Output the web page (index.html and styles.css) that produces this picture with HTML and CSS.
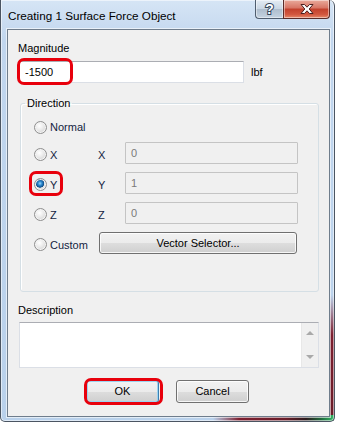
FILE: index.html
```html
<!DOCTYPE html>
<html lang="en">
<head>
  <meta charset="UTF-8">
  <meta name="viewport" content="width=device-width, initial-scale=1.0">
  <title>Creating 1 Surface Force Object</title>
  <link rel="stylesheet" href="styles.css">
</head>
<body>
  <div class="window">
    <div class="titlebar">
      <span class="title">Creating 1 Surface Force Object</span>
      <div class="caption-btns">
        <span class="cap-btn help">?</span>
        <span class="cap-btn close">
          <svg width="16" height="12" viewBox="0 0 16 12">
            <path d="M2 1.5 H5.5 L8 4.2 L10.5 1.5 H14 L10.2 6 L14 10.5 H10.5 L8 7.8 L5.5 10.5 H2 L5.8 6 Z" fill="#fff" stroke="#4a1f1f" stroke-width="1" stroke-linejoin="round"/>
          </svg>
        </span>
      </div>
    </div>

    <div class="client">
      <div class="label">Magnitude</div>
      <div class="mag-row">
        <div class="mark-wrap">
          <div class="textbox mag">-1500</div>
          <span class="mark mark-mag"></span>
        </div>
        <span class="unit">lbf</span>
      </div>

      <fieldset class="group">
        <legend>Direction</legend>
        <div class="dir-grid">
          <div class="dir-row first">
            <span class="radio"></span><span class="radio-text">Normal</span>
          </div>
          <div class="dir-row">
            <div class="opt"><span class="radio"></span><span class="radio-text">X</span></div>
            <span class="axis">X</span>
            <div class="textbox disabled">0</div>
          </div>
          <div class="dir-row">
            <div class="opt">
              <span class="radio checked"></span><span class="radio-text">Y</span>
              <span class="mark mark-y"></span>
            </div>
            <span class="axis">Y</span>
            <div class="textbox disabled">1</div>
          </div>
          <div class="dir-row">
            <div class="opt"><span class="radio"></span><span class="radio-text">Z</span></div>
            <span class="axis">Z</span>
            <div class="textbox disabled">0</div>
          </div>
          <div class="dir-row">
            <div class="opt"><span class="radio"></span><span class="radio-text">Custom</span></div>
            <div class="btn vector">Vector Selector...</div>
          </div>
        </div>
      </fieldset>

      <div class="label desc-label">Description</div>
      <div class="memo">
        <div class="memo-scroll">
          <span class="arrow up"></span>
          <span class="arrow down"></span>
        </div>
      </div>

      <div class="actions">
        <div class="mark-wrap">
          <div class="btn default">OK</div>
          <span class="mark mark-ok"></span>
        </div>
        <div class="btn">Cancel</div>
      </div>
    </div>
  </div>
</body>
</html>
```

FILE: styles.css
```css
body {
  margin: 0;
  background: #ffffff;
  font-family: "Liberation Sans", Arial, sans-serif;
  font-size: 11px;
  color: #000;
}

.window {
  box-sizing: border-box;
  width: 335px;
  height: 422px;
  border: 1px solid #4b5562;
  border-top: none;
  border-radius: 0 6px 5px 5px;
  background:
    linear-gradient(to right, rgba(125, 31, 48, 0) 212px, #7d1f30 238px, #6a1c28 285px, #2b1a1c 305px, #1f6a3c 320px, #34b866) left bottom / 100% 6px no-repeat,
    linear-gradient(rgba(125, 31, 48, 0) 295px, #7d1f30 335px, #6a1c28) right top / 5px 100% no-repeat,
    linear-gradient(#d6e5f5, #c1d6ee 40px, #b9d1eb);
  box-shadow: inset 0 0 0 1px rgba(255, 255, 255, 0.55);
  padding: 0 4px 4px 6px;
  display: flex;
  flex-direction: column;
}

.titlebar {
  height: 29px;
  flex: none;
  display: flex;
  justify-content: space-between;
  align-items: flex-start;
}

.title {
  font-size: 11.7px;
  margin: 9px 0 0 1px;
}

.caption-btns {
  display: flex;
}

.cap-btn {
  box-sizing: border-box;
  height: 19px;
  border: 1px solid #4f5d6e;
  border-top: none;
  display: flex;
  align-items: center;
  justify-content: center;
  box-shadow: inset 0 0 0 1px rgba(255, 255, 255, 0.45);
}

.help {
  width: 28px;
  border-radius: 0 0 0 4px;
  border-right: none;
  background: linear-gradient(#e3ebf3, #c9d6e3 50%, #aebdcd 51%, #c5d3e1);
  color: #fff;
  font-weight: bold;
  font-size: 14px;
  -webkit-text-stroke: 2px #33475c;
  paint-order: stroke fill;
}

.close {
  width: 47px;
  border-color: #5a2c2a;
  border-radius: 0 0 4px 0;
  background: linear-gradient(#e9aa9c, #d77464 45%, #c2402c 50%, #d2573f 80%, #e6896a);
}

.client {
  flex: 1;
  background: #f0f0f0;
  border: 1px solid #6f7d8c;
  box-shadow: 0 0 0 1px rgba(255, 255, 255, 0.6);
  padding: 11px 10px 0 10px;
}

.label {
  height: 14px;
  line-height: 14px;
}

.mag-row {
  display: flex;
  align-items: center;
  margin-top: 6px;
}

.mark-wrap {
  position: relative;
}

.textbox {
  box-sizing: border-box;
  height: 22px;
  line-height: 20px;
  padding: 0 5px;
  background: #fff;
  border: 1px solid #dbdfe6;
  border-top-color: #abadb3;
  border-left-color: #e2e3ea;
}

.mag {
  width: 226px;
  padding-left: 6px;
}

.unit {
  margin-left: 7px;
}

.mark {
  position: absolute;
  border: 3px solid #e8000c;
  border-radius: 7px;
  box-sizing: border-box;
}

.mark-mag {
  left: -1px;
  top: -3px;
  width: 56px;
  height: 27px;
}

.group {
  margin: 13px 0 0 2px;
  padding: 0 0 37px 0;
  width: 297px;
  border: 1px solid #d5dfe5;
  border-radius: 3px;
  box-shadow: inset 1px 1px 0 #fff;
}

.group legend {
  padding: 0 2px;
  margin-left: 4px;
  line-height: 14px;
}

.dir-grid {
  display: flex;
  flex-direction: column;
  gap: 8px;
  padding: 6px 0 0 13px;
}

.dir-row {
  display: grid;
  grid-template-columns: 64px 27px 173px;
  align-items: center;
  height: 22px;
}

.dir-row.first {
  display: flex;
  align-items: center;
  height: 22px;
  margin-bottom: -4px;
}

.opt {
  position: relative;
  display: flex;
  align-items: center;
  margin-top: 3px;
}

.radio {
  width: 11px;
  height: 11px;
  border-radius: 50%;
  border: 1px solid #8f8f8f;
  background: radial-gradient(circle at 40% 35%, #ffffff 0, #eeeeee 35%, #c9c9c9 100%);
  box-shadow: inset 0 0 0 1px #f4f4f4;
  flex: none;
}

.radio.checked {
  background:
    radial-gradient(circle at 45% 40%, #9fd6f6 0, #2d8ad0 2px, #0f4d87 4px, transparent 4.5px),
    radial-gradient(circle at 40% 35%, #ffffff 0, #eeeeee 35%, #c9c9c9 100%);
}

.radio-text {
  margin-left: 3px;
  color: #13233f;
}

.axis {
  color: #13233f;
  margin-top: 3px;
}

.textbox.disabled {
  background: #f0f0f0;
  border: 1px solid #c4c4c4;
  color: #7a7a7a;
  border-radius: 1px;
}

.mark-y {
  left: -5px;
  top: -7px;
  width: 34px;
  height: 25px;
}

.btn {
  box-sizing: border-box;
  height: 23px;
  line-height: 21px;
  text-align: center;
  border: 1px solid #707070;
  border-radius: 3px;
  background: linear-gradient(#f2f2f2, #ebebeb 50%, #dddddd 51%, #cfcfcf);
  box-shadow: inset 0 0 0 1px rgba(255, 255, 255, 0.8);
}

.vector {
  grid-column: 2 / 4;
  width: 198px;
  margin-left: 1px;
  height: 22px;
  line-height: 20px;
}

.desc-label {
  margin-top: 11px;
}

.memo {
  position: relative;
  margin: 5px 0 0 1px;
  width: 300px;
  height: 46px;
  box-sizing: border-box;
  background: #fff;
  border: 1px solid #dbdfe6;
  border-top-color: #abadb3;
  display: flex;
  justify-content: flex-end;
}

.memo-scroll {
  width: 16px;
  background: #f0f0f0;
  border-left: 1px solid #e8e8e8;
  display: flex;
  flex-direction: column;
  justify-content: space-between;
  align-items: center;
  padding: 8px 0 8px;
}

.arrow {
  width: 0;
  height: 0;
  border-left: 4px solid transparent;
  border-right: 4px solid transparent;
}

.arrow.up {
  border-bottom: 4px solid #a9a9a9;
}

.arrow.down {
  border-top: 4px solid #a9a9a9;
}

.actions {
  display: flex;
  gap: 17px;
  margin: 12px 0 0 68px;
}

.actions .btn {
  width: 73px;
}

.btn.default {
  border-color: #3c7fb1;
  box-shadow: inset 0 0 0 1px #9cd3f0;
}

.mark-ok {
  left: -2px;
  top: -2px;
  width: 79px;
  height: 27px;
}
```
